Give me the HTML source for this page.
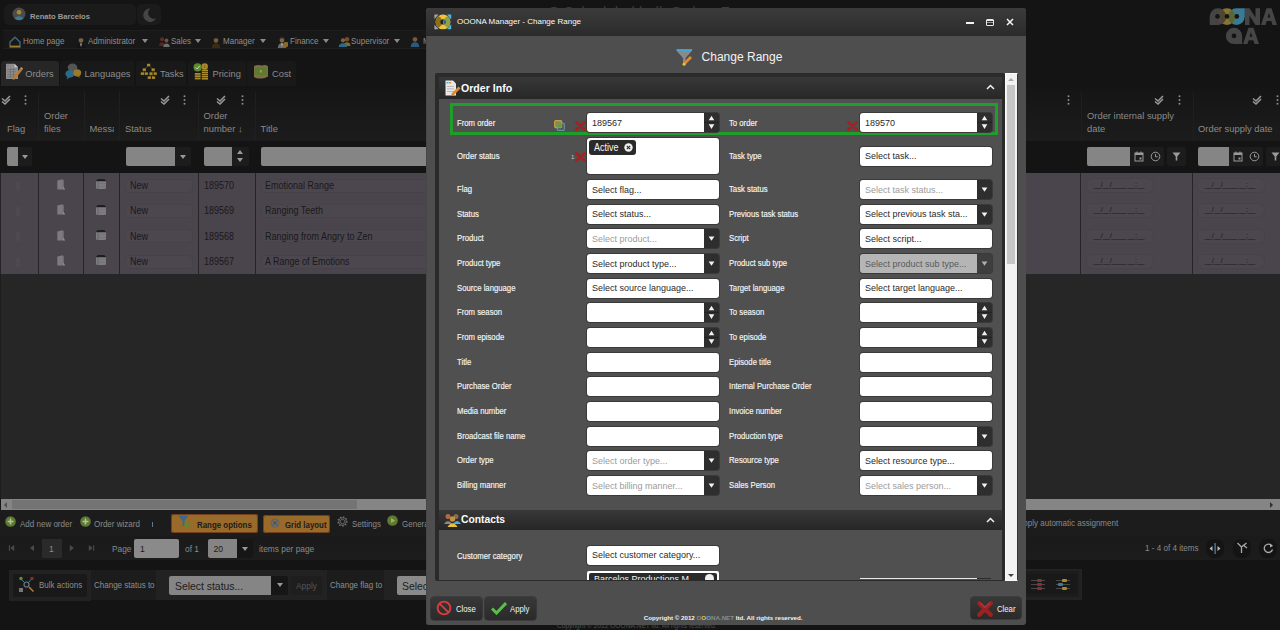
<!DOCTYPE html><html><head><meta charset="utf-8"><title>OOONA Manager - Change Range</title><style>
*{box-sizing:border-box;margin:0;padding:0}
html,body{width:1280px;height:630px;overflow:hidden}
body{position:relative;background:#141414;font-family:"Liberation Sans",sans-serif;color:#9a9a9a}
.ab{position:absolute}
.t{position:absolute;white-space:nowrap;line-height:1}
.lbl{position:absolute;white-space:nowrap;line-height:1;font-size:8.7px;color:#f6f6f6;transform:scaleX(0.89);transform-origin:0 0;-webkit-text-stroke:0.15px #f6f6f6}
.inp{position:absolute;background:#fff;border-radius:3px;box-shadow:0 0 0 1px #3a3a3a;height:19px;overflow:hidden}
.inp span{position:absolute;left:5.4px;top:4.5px;font-size:9.9px;line-height:1;color:#2a2a2a;white-space:nowrap;transform:scaleX(0.91);transform-origin:0 0}
.inp span.ph{color:#9b9b9b}
.arr{position:absolute;top:0;right:0;width:15px;height:100%;background:#2e2e2e;border-radius:0 3px 3px 0}
.spin{position:absolute;top:0;right:0;width:15px;height:19px;background:#2e2e2e;border-radius:0 3px 3px 0}
.arr svg,.spin svg{position:absolute;left:0;top:0}
.rx{position:absolute;width:11px;height:10px}
.hdrtxt{font-size:9.4px;color:#8a8a8a}
.cell{position:absolute;background:#4a454c}
.btn{position:absolute;background:linear-gradient(#383838,#2a2a2a);border-radius:3px;box-shadow:0 0 0 0.6px #2a2a2a}
</style></head><body>
<div class="ab" style="left:4px;top:4px;width:132px;height:21px;background:#1b1b1b;border-radius:5px"></div>
<svg class="ab" style="left:12px;top:7px" width="14" height="14" viewBox="0 0 14 14"><circle cx="7" cy="7" r="6.5" fill="#4b4b4b"/><circle cx="7" cy="5.2" r="2.3" fill="#a8892e"/><path d="M2.8 11.2 Q7 7.2 11.2 11.2 L11 12 Q7 14 3 12Z" fill="#3a7d9a"/></svg>
<div class="t" style="left:30px;top:12.5px;font-size:7.6px;font-weight:bold;color:#9a9a9a">Renato Barcelos</div>
<div class="ab" style="left:137px;top:4px;width:24px;height:21px;background:#1b1b1b;border-radius:5px"></div>
<svg class="ab" style="left:141.5px;top:8.3px" width="15" height="14" viewBox="0 0 15 14"><path d="M8.5 0.5 A6.7 6.7 0 1 0 14 10.2 A5.6 5.6 0 0 1 8.5 0.5Z" fill="#454545"/></svg>
<div class="ab" style="left:3px;top:30px;width:440px;height:19px;background:#181818;border-top:1px solid #1e1e1e;border-bottom:1px solid #1f1f1f"></div>
<svg class="ab" style="left:9px;top:35.5px" width="12" height="12" viewBox="0 0 12 12"><path d="M1 6 L6 1.2 L11 6 V11 H1Z" fill="none" stroke="#3a6e88" stroke-width="1.3"/><path d="M1 9.6 H11 V11 H1Z" fill="#9a7e2c"/><path d="M1 6 L6 1.2" stroke="#555" stroke-width="1.3"/></svg>
<div class="t" style="left:22.7px;top:36.9px;font-size:9px;color:#8e8e8e;transform:scaleX(0.89);transform-origin:0 0">Home page</div>
<svg class="ab" style="left:75.6px;top:35.5px" width="10" height="12" viewBox="0 0 10 12"><path d="M0.8 12 Q0.8 7.2 5 7.2 Q9.2 7.2 9.2 12Z" fill="#141414"/><path d="M3.8 7.4 L5 11 L6.2 7.4Z" fill="#9a9a9a"/><ellipse cx="5" cy="4" rx="2.3" ry="2.7" fill="#7a6448"/><path d="M2.6 3.6 Q2.6 0.8 5 0.8 Q7.4 0.8 7.4 3.6 Q6.5 2.2 5 2.2 Q3.5 2.2 2.6 3.6Z" fill="#1a1a1a"/></svg>
<div class="t" style="left:88px;top:36.9px;font-size:9px;color:#8e8e8e;transform:scaleX(0.89);transform-origin:0 0">Administrator</div>
<div class="ab" style="left:142px;top:39px;border-left:3px solid transparent;border-right:3px solid transparent;border-top:4px solid #8a8a8a"></div>
<svg class="ab" style="left:157.5px;top:36px" width="13" height="11" viewBox="0 0 13 11"><circle cx="4" cy="3.2" r="2" fill="#5e2e28"/><path d="M1 10 Q1 6.2 4 6.2 Q7 6.2 7 10Z" fill="#5a2222"/><circle cx="8.5" cy="4.5" r="1.9" fill="#6a5840"/><path d="M5.3 11 Q5.3 7.5 8.5 7.5 Q11.7 7.5 11.7 11Z" fill="#6e6e6e"/></svg>
<div class="t" style="left:170.6px;top:36.9px;font-size:9px;color:#8e8e8e;transform:scaleX(0.89);transform-origin:0 0">Sales</div>
<div class="ab" style="left:194.7px;top:39px;border-left:3px solid transparent;border-right:3px solid transparent;border-top:4px solid #8a8a8a"></div>
<svg class="ab" style="left:211.4px;top:35.5px" width="10" height="12" viewBox="0 0 10 12"><path d="M0.8 12 Q0.8 7.2 5 7.2 Q9.2 7.2 9.2 12Z" fill="#3a2a18"/><ellipse cx="5" cy="4" rx="2.3" ry="2.7" fill="#7a5a38"/><path d="M2.6 3.6 Q2.6 0.8 5 0.8 Q7.4 0.8 7.4 3.6 Q6.5 2.2 5 2.2 Q3.5 2.2 2.6 3.6Z" fill="#1a1a1a"/></svg>
<div class="t" style="left:223.4px;top:36.9px;font-size:9px;color:#8e8e8e;transform:scaleX(0.89);transform-origin:0 0">Manager</div>
<div class="ab" style="left:260.4px;top:39px;border-left:3px solid transparent;border-right:3px solid transparent;border-top:4px solid #8a8a8a"></div>
<svg class="ab" style="left:276.5px;top:35.5px" width="10" height="12" viewBox="0 0 10 12"><path d="M0.8 12 Q0.8 7.2 5 7.2 Q9.2 7.2 9.2 12Z" fill="#6a6a6a"/><path d="M3.8 7.4 L5 11 L6.2 7.4Z" fill="#aaa"/><ellipse cx="5" cy="4" rx="2.3" ry="2.7" fill="#7a6448"/><path d="M2.6 3.6 Q2.6 0.8 5 0.8 Q7.4 0.8 7.4 3.6 Q6.5 2.2 5 2.2 Q3.5 2.2 2.6 3.6Z" fill="#2a2a2a"/></svg>
<div class="ab" style="left:284px;top:42px;width:4px;height:5px;background:#8a6a20;border-radius:1px"></div>
<div class="t" style="left:289.7px;top:36.9px;font-size:9px;color:#8e8e8e;transform:scaleX(0.89);transform-origin:0 0">Finance</div>
<div class="ab" style="left:322.8px;top:39px;border-left:3px solid transparent;border-right:3px solid transparent;border-top:4px solid #8a8a8a"></div>
<svg class="ab" style="left:337.5px;top:36px" width="14" height="11" viewBox="0 0 14 11"><circle cx="9" cy="3.2" r="2.2" fill="#7a4a30"/><path d="M5.5 10 Q5.5 6.2 9 6.2 Q12.5 6.2 12.5 10Z" fill="#8a6a20"/><circle cx="5" cy="4.3" r="2.1" fill="#7a6448"/><path d="M0.8 11 Q0.8 7.3 5 7.3 Q9.2 7.3 9.2 11Z" fill="#2e6a86"/></svg>
<div class="t" style="left:351px;top:36.9px;font-size:9px;color:#8e8e8e;transform:scaleX(0.89);transform-origin:0 0">Supervisor</div>
<div class="ab" style="left:393.8px;top:39px;border-left:3px solid transparent;border-right:3px solid transparent;border-top:4px solid #8a8a8a"></div>
<svg class="ab" style="left:409.5px;top:35px" width="10" height="12" viewBox="0 0 10 12"><path d="M0.8 12 Q0.8 7.2 5 7.2 Q9.2 7.2 9.2 12Z" fill="#2a5a7a"/><ellipse cx="5" cy="4" rx="2.3" ry="2.7" fill="#7a5a38"/><path d="M2.6 3.6 Q2.6 0.8 5 0.8 Q7.4 0.8 7.4 3.6 Q6.5 2.2 5 2.2 Q3.5 2.2 2.6 3.6Z" fill="#1a1a1a"/></svg>
<div class="t" style="left:423px;top:36.9px;font-size:9px;color:#8e8e8e;transform:scaleX(0.89);transform-origin:0 0">M</div>
<div class="ab" style="left:1px;top:60.5px;width:57.6px;height:25px;background:#262626;border-radius:3px 3px 0 0"></div>
<div class="t" style="left:25.3px;top:69.5px;font-size:9.3px;color:#8c8c8c">Orders</div>
<div class="ab" style="left:60px;top:60.5px;width:73.6px;height:25px;background:#191919;border-radius:3px 3px 0 0"></div>
<div class="t" style="left:84.5px;top:69.5px;font-size:9.3px;color:#8c8c8c">Languages</div>
<div class="ab" style="left:135.5px;top:60.5px;width:50.5px;height:25px;background:#191919;border-radius:3px 3px 0 0"></div>
<div class="t" style="left:160px;top:69.5px;font-size:9.3px;color:#8c8c8c">Tasks</div>
<div class="ab" style="left:188px;top:60.5px;width:57.599999999999994px;height:25px;background:#191919;border-radius:3px 3px 0 0"></div>
<div class="t" style="left:212.5px;top:69.5px;font-size:9.3px;color:#8c8c8c">Pricing</div>
<div class="ab" style="left:247px;top:60.5px;width:48.80000000000001px;height:25px;background:#191919;border-radius:3px 3px 0 0"></div>
<div class="t" style="left:272px;top:69.5px;font-size:9.3px;color:#8c8c8c">Cost</div>
<svg class="ab" style="left:5px;top:63px" width="18" height="17" viewBox="0 0 18 17"><path d="M1 0.8 H9.5 L13 4.3 V16 H1Z" fill="#8e8e8e"/><path d="M9.5 0.8 V4.3 H13Z" fill="#c8c8c8"/><rect x="2" y="2.2" width="1.6" height="1" fill="#4a8ab0"/><rect x="4" y="2.2" width="1.6" height="1" fill="#b08a30"/><g fill="#6a6a6a"><rect x="2.2" y="6" width="9" height="0.7"/><rect x="2.2" y="8.5" width="9" height="0.7"/><rect x="2.2" y="11" width="9" height="0.7"/><rect x="2.2" y="13.5" width="9" height="0.7"/><rect x="5" y="5" width="0.7" height="10"/><rect x="8" y="5" width="0.7" height="10"/></g><path d="M8 14.5 L15.2 5.2 L17.3 6.9 L10.1 16.2 L7.6 16.8Z" fill="#b87a34"/><path d="M15.2 5.2 L16.2 4 L18 5.6 L17.3 6.9Z" fill="#c8a070"/></svg>
<svg class="ab" style="left:65px;top:63px" width="17" height="17" viewBox="0 0 17 17"><ellipse cx="7.5" cy="4.5" rx="4.8" ry="4" fill="#555"/><path d="M6 8 L5.5 11 L8.5 8Z" fill="#555"/><ellipse cx="5" cy="10.8" rx="4.6" ry="3.8" fill="#2c6a88"/><path d="M2.5 13.5 L1.5 16.5 L5.5 14Z" fill="#2c6a88"/><ellipse cx="12.2" cy="9.8" rx="4" ry="3.6" fill="#9a7a2a"/><path d="M13.5 12.5 L15.5 15 L12 13Z" fill="#9a7a2a"/></svg>
<svg class="ab" style="left:140px;top:63px" width="18" height="17" viewBox="140 63 18 17"><g stroke="#6a5a2a" stroke-width="0.6" fill="none"><path d="M148.6 65 L144.3 69.6 M148.6 65 L153.2 69.6 M144.3 69.6 L142.4 73.6 M144.3 69.6 L146.3 73.6 M153.2 69.6 L151 73.6 M153.2 69.6 L155.2 73.6 M151 73.6 L149.3 77.6 M151 73.6 L153.5 77.6"/></g><g fill="#a8892e"><rect x="147" y="63.8" width="3.2" height="2.5"/><rect x="142.7" y="68.4" width="3.2" height="2.5"/><rect x="151.6" y="68.4" width="3.2" height="2.5"/><rect x="140.8" y="72.4" width="3.2" height="2.5"/><rect x="144.7" y="72.4" width="3.2" height="2.5"/><rect x="149.4" y="72.4" width="3.2" height="2.5"/><rect x="153.6" y="72.4" width="3.2" height="2.5"/><rect x="147.7" y="76.4" width="3.2" height="2.5"/><rect x="151.9" y="76.4" width="3.2" height="2.5"/></g></svg>
<svg class="ab" style="left:193px;top:62px" width="16" height="18" viewBox="193 62 16 18"><g fill="#a8892e"><rect x="194.8" y="73" width="5.8" height="1.8"/><rect x="194.8" y="75.3" width="5.8" height="1.8"/><rect x="194.8" y="77.6" width="5.8" height="1.8"/><rect x="201.7" y="69.6" width="6.3" height="1.6"/><rect x="201.7" y="71.7" width="6.3" height="1.6"/><rect x="201.7" y="73.8" width="6.3" height="1.6"/><rect x="201.7" y="75.9" width="6.3" height="1.6"/><rect x="201.7" y="78" width="6.3" height="1.6"/><circle cx="204.7" cy="66.5" r="3.2"/></g><circle cx="197.6" cy="67.4" r="4.1" fill="#5e8a2e"/><path d="M195.6 67.4 L197.2 69 L199.8 65.8" fill="none" stroke="#ddd" stroke-width="0.9"/><rect x="204.2" y="65" width="1" height="3" fill="#7a6420"/></svg>
<svg class="ab" style="left:253px;top:64px" width="16" height="16" viewBox="253 64 16 16"><path d="M254 66 Q258 64.3 262 65.5 Q266 64.3 268 66.5 V76.5 Q264 79 261 78.5 Q257 79 254 77Z" fill="#7e6e44"/><rect x="254.8" y="67.6" width="12" height="7.3" fill="#5e7a2e"/><rect x="259.8" y="70" width="2" height="2.5" fill="#8aa060"/></svg>
<div class="ab" style="left:0;top:88px;width:1280px;height:53px;background:linear-gradient(#151515,#1c1c1c)"></div>
<div class="ab" style="left:38.3px;top:92px;width:1px;height:49px;background:#1f1f1f"></div>
<div class="ab" style="left:83.8px;top:92px;width:1px;height:49px;background:#1f1f1f"></div>
<div class="ab" style="left:119.2px;top:92px;width:1px;height:49px;background:#1f1f1f"></div>
<div class="ab" style="left:198px;top:92px;width:1px;height:49px;background:#1f1f1f"></div>
<div class="ab" style="left:254.9px;top:92px;width:1px;height:49px;background:#1f1f1f"></div>
<div class="ab" style="left:1080.5px;top:92px;width:1px;height:49px;background:#1f1f1f"></div>
<div class="ab" style="left:1192.7px;top:92px;width:1px;height:49px;background:#1f1f1f"></div>
<div class="t hdrtxt" style="left:7px;top:123.5px">Flag</div>
<div class="t hdrtxt" style="left:44px;top:110.5px">Order</div>
<div class="t hdrtxt" style="left:44px;top:123.5px">files</div>
<div class="t hdrtxt" style="left:89.5px;top:123.5px;width:24px;overflow:hidden">Messa</div>
<div class="t hdrtxt" style="left:125px;top:123.5px">Status</div>
<div class="t hdrtxt" style="left:203.5px;top:110.5px">Order</div>
<div class="t hdrtxt" style="left:203.5px;top:123.5px">number ↓</div>
<div class="t hdrtxt" style="left:260.5px;top:123.5px">Title</div>
<div class="t hdrtxt" style="left:1087px;top:110.5px">Order internal supply</div>
<div class="t hdrtxt" style="left:1087px;top:123.5px">date</div>
<div class="t hdrtxt" style="left:1198px;top:123.5px">Order supply date</div>
<svg class="ab" style="left:1px;top:95px" width="10" height="10" viewBox="0 0 10 10"><path d="M1 3.5 L4 6 L9 1 M1 6.5 L4 9 L9 4" fill="none" stroke="#9a9a9a" stroke-width="1.5"/></svg>
<svg class="ab" style="left:160px;top:95px" width="10" height="10" viewBox="0 0 10 10"><path d="M1 3.5 L4 6 L9 1 M1 6.5 L4 9 L9 4" fill="none" stroke="#9a9a9a" stroke-width="1.5"/></svg>
<svg class="ab" style="left:216px;top:95px" width="10" height="10" viewBox="0 0 10 10"><path d="M1 3.5 L4 6 L9 1 M1 6.5 L4 9 L9 4" fill="none" stroke="#9a9a9a" stroke-width="1.5"/></svg>
<svg class="ab" style="left:1154px;top:95px" width="10" height="10" viewBox="0 0 10 10"><path d="M1 3.5 L4 6 L9 1 M1 6.5 L4 9 L9 4" fill="none" stroke="#9a9a9a" stroke-width="1.5"/></svg>
<svg class="ab" style="left:1252px;top:95px" width="10" height="10" viewBox="0 0 10 10"><path d="M1 3.5 L4 6 L9 1 M1 6.5 L4 9 L9 4" fill="none" stroke="#9a9a9a" stroke-width="1.5"/></svg>
<svg class="ab" style="left:23.5px;top:95px" width="3" height="10" viewBox="0 0 3 10"><circle cx="1.5" cy="1.2" r="1" fill="#8a8a8a"/><circle cx="1.5" cy="5" r="1" fill="#8a8a8a"/><circle cx="1.5" cy="8.8" r="1" fill="#8a8a8a"/></svg>
<svg class="ab" style="left:182.5px;top:95px" width="3" height="10" viewBox="0 0 3 10"><circle cx="1.5" cy="1.2" r="1" fill="#8a8a8a"/><circle cx="1.5" cy="5" r="1" fill="#8a8a8a"/><circle cx="1.5" cy="8.8" r="1" fill="#8a8a8a"/></svg>
<svg class="ab" style="left:240.5px;top:95px" width="3" height="10" viewBox="0 0 3 10"><circle cx="1.5" cy="1.2" r="1" fill="#8a8a8a"/><circle cx="1.5" cy="5" r="1" fill="#8a8a8a"/><circle cx="1.5" cy="8.8" r="1" fill="#8a8a8a"/></svg>
<svg class="ab" style="left:1066.5px;top:95px" width="3" height="10" viewBox="0 0 3 10"><circle cx="1.5" cy="1.2" r="1" fill="#8a8a8a"/><circle cx="1.5" cy="5" r="1" fill="#8a8a8a"/><circle cx="1.5" cy="8.8" r="1" fill="#8a8a8a"/></svg>
<svg class="ab" style="left:1177.5px;top:95px" width="3" height="10" viewBox="0 0 3 10"><circle cx="1.5" cy="1.2" r="1" fill="#8a8a8a"/><circle cx="1.5" cy="5" r="1" fill="#8a8a8a"/><circle cx="1.5" cy="8.8" r="1" fill="#8a8a8a"/></svg>
<svg class="ab" style="left:1276px;top:95px" width="3" height="10" viewBox="0 0 3 10"><circle cx="1.5" cy="1.2" r="1" fill="#8a8a8a"/><circle cx="1.5" cy="5" r="1" fill="#8a8a8a"/><circle cx="1.5" cy="8.8" r="1" fill="#8a8a8a"/></svg>
<div class="ab" style="left:0;top:141px;width:1280px;height:32px;background:#141414"></div>
<div class="ab" style="left:7px;top:147.3px;width:24.7px;height:18.69999999999999px;background:#1c1c1c;border-radius:2px"></div><div class="ab" style="left:7px;top:147.3px;width:11px;height:18.69999999999999px;background:#858585;border-radius:2px 0 0 2px"></div><div class="ab" style="left:21.85px;top:155px;border-left:3px solid transparent;border-right:3px solid transparent;border-top:4px solid #9a9a9a"></div>
<div class="ab" style="left:125.8px;top:147.3px;width:65.60000000000001px;height:18.69999999999999px;background:#1c1c1c;border-radius:2px"></div><div class="ab" style="left:125.8px;top:147.3px;width:49.2px;height:18.69999999999999px;background:#858585;border-radius:2px 0 0 2px"></div><div class="ab" style="left:180.2px;top:155px;border-left:3px solid transparent;border-right:3px solid transparent;border-top:4px solid #9a9a9a"></div>
<div class="ab" style="left:204px;top:147.3px;width:44.69999999999999px;height:18.69999999999999px;background:#1c1c1c;border-radius:2px"></div><div class="ab" style="left:204px;top:147.3px;width:28px;height:18.69999999999999px;background:#858585;border-radius:2px 0 0 2px"></div><div class="ab" style="left:237.35px;top:150px;border-left:3px solid transparent;border-right:3px solid transparent;border-bottom:4px solid #9a9a9a"></div><div class="ab" style="left:237.35px;top:158px;border-left:3px solid transparent;border-right:3px solid transparent;border-top:4px solid #9a9a9a"></div>
<div class="ab" style="left:261px;top:147.3px;width:170px;height:18.7px;background:#858585;border-radius:2px"></div>
<div class="ab" style="left:1087px;top:147.3px;width:76.5px;height:18.7px;background:#1c1c1c;border-radius:2px"></div><div class="ab" style="left:1087px;top:147.3px;width:43px;height:18.7px;background:#858585;border-radius:2px 0 0 2px"></div><svg class="ab" style="left:1134px;top:151px" width="10" height="11" viewBox="0 0 10 11"><rect x="1" y="2" width="8" height="8" fill="none" stroke="#9a9a9a" stroke-width="1"/><rect x="1" y="2" width="8" height="2" fill="#9a9a9a"/><rect x="2.5" y="0.5" width="1" height="2" fill="#9a9a9a"/><rect x="6.5" y="0.5" width="1" height="2" fill="#9a9a9a"/><rect x="5.5" y="6.5" width="2" height="2" fill="#9a9a9a"/></svg><svg class="ab" style="left:1149.5px;top:151px" width="11" height="11" viewBox="0 0 11 11"><circle cx="5.5" cy="5.5" r="4.3" fill="none" stroke="#9a9a9a" stroke-width="1"/><path d="M5.5 3 V5.8 H7.8" fill="none" stroke="#9a9a9a" stroke-width="1"/></svg><div class="ab" style="left:1167.3px;top:147.3px;width:19px;height:18.7px;background:#1c1c1c;border-radius:2px"></div><svg class="ab" style="left:1172.3px;top:152px" width="9" height="9" viewBox="0 0 9 9"><path d="M0.5 0.5 H8.5 L5.3 4.5 V8.5 H3.7 V4.5Z" fill="#9a9a9a"/></svg>
<div class="ab" style="left:1198px;top:147.3px;width:64.5px;height:18.7px;background:#1c1c1c;border-radius:2px"></div><div class="ab" style="left:1198px;top:147.3px;width:31px;height:18.7px;background:#858585;border-radius:2px 0 0 2px"></div><svg class="ab" style="left:1233px;top:151px" width="10" height="11" viewBox="0 0 10 11"><rect x="1" y="2" width="8" height="8" fill="none" stroke="#9a9a9a" stroke-width="1"/><rect x="1" y="2" width="8" height="2" fill="#9a9a9a"/><rect x="2.5" y="0.5" width="1" height="2" fill="#9a9a9a"/><rect x="6.5" y="0.5" width="1" height="2" fill="#9a9a9a"/><rect x="5.5" y="6.5" width="2" height="2" fill="#9a9a9a"/></svg><svg class="ab" style="left:1248.5px;top:151px" width="11" height="11" viewBox="0 0 11 11"><circle cx="5.5" cy="5.5" r="4.3" fill="none" stroke="#9a9a9a" stroke-width="1"/><path d="M5.5 3 V5.8 H7.8" fill="none" stroke="#9a9a9a" stroke-width="1"/></svg><div class="ab" style="left:1266.3px;top:147.3px;width:19px;height:18.7px;background:#1c1c1c;border-radius:2px"></div><svg class="ab" style="left:1271.3px;top:152px" width="9" height="9" viewBox="0 0 9 9"><path d="M0.5 0.5 H8.5 L5.3 4.5 V8.5 H3.7 V4.5Z" fill="#9a9a9a"/></svg>
<div class="ab" style="left:0;top:172.7px;width:1280px;height:101px;background:#4a454c"></div>
<div class="ab" style="left:0px;top:172.7px;width:1.2px;height:101px;background:#262427"></div>
<div class="ab" style="left:38.1px;top:172.7px;width:0.9px;height:101px;background:#262427"></div>
<div class="ab" style="left:83.2px;top:172.7px;width:0.9px;height:101px;background:#262427"></div>
<div class="ab" style="left:118.9px;top:172.7px;width:0.9px;height:101px;background:#262427"></div>
<div class="ab" style="left:198px;top:172.7px;width:0.9px;height:101px;background:#262427"></div>
<div class="ab" style="left:254.9px;top:172.7px;width:0.9px;height:101px;background:#262427"></div>
<div class="ab" style="left:1080.2px;top:172.7px;width:0.9px;height:101px;background:#262427"></div>
<div class="ab" style="left:1192.4px;top:172.7px;width:0.9px;height:101px;background:#262427"></div>
<div class="ab" style="left:16px;top:181.5px;width:4px;height:9px;background:#4e4950"></div>
<svg class="ab" style="left:56.8px;top:178.9px" width="9" height="11" viewBox="0 0 9 11"><path d="M0.3 1.5 L5.5 0.3 V10.5 H0.3Z" fill="#7c7a7e"/><path d="M5.5 0.3 L6.5 1.2 V7.5 L8.2 10.5 H5.5Z" fill="#8e8c90"/></svg>
<svg class="ab" style="left:96.2px;top:179.2px" width="10" height="10" viewBox="0 0 10 10"><rect x="0" y="0" width="10" height="10" rx="1.5" fill="#7e7c80"/><path d="M0 2 Q0 0 2 0 H8 Q10 0 10 2 V2.2 H0Z" fill="#1e1e1e"/><rect x="1.6" y="2.2" width="0.8" height="7.8" fill="#5e5c60"/><g fill="#6e6c70"><rect x="3" y="4.5" width="7" height="0.5"/><rect x="3" y="7" width="7" height="0.5"/></g></svg>
<div class="ab" style="left:125px;top:178.5px;width:68px;height:14px;border:1px solid #47424a;border-radius:4px;background:#4c474e"></div>
<div class="t" style="left:129.5px;top:180.9px;font-size:10px;color:#1a181b;transform:scaleX(0.9);transform-origin:0 0">New</div>
<div class="t" style="left:204px;top:180.9px;font-size:10px;color:#1a181b;transform:scaleX(0.9);transform-origin:0 0">189570</div>
<div class="ab" style="left:261px;top:178.5px;width:170px;height:14px;border:1px solid #47424a;border-radius:4px;background:#4c474e"></div>
<div class="t" style="left:264.5px;top:180.9px;font-size:10px;color:#1a181b;transform:scaleX(0.9);transform-origin:0 0">Emotional Range</div>
<div class="ab" style="left:1086px;top:178.0px;width:68px;height:15px;border:1px solid #47424a;border-radius:6px;background:#4c474e"></div>
<div class="t" style="left:1093.5px;top:180.9px;font-size:7.4px;color:#1a181b;letter-spacing:-0.45px">__/__/____ __:__</div>
<div class="ab" style="left:1197px;top:178.0px;width:68px;height:15px;border:1px solid #47424a;border-radius:6px;background:#4c474e"></div>
<div class="t" style="left:1204.5px;top:180.9px;font-size:7.4px;color:#1a181b;letter-spacing:-0.45px">__/__/____ __:__</div>
<div class="ab" style="left:16px;top:206.9px;width:4px;height:9px;background:#4e4950"></div>
<svg class="ab" style="left:56.8px;top:204.3px" width="9" height="11" viewBox="0 0 9 11"><path d="M0.3 1.5 L5.5 0.3 V10.5 H0.3Z" fill="#7c7a7e"/><path d="M5.5 0.3 L6.5 1.2 V7.5 L8.2 10.5 H5.5Z" fill="#8e8c90"/></svg>
<svg class="ab" style="left:96.2px;top:204.6px" width="10" height="10" viewBox="0 0 10 10"><rect x="0" y="0" width="10" height="10" rx="1.5" fill="#7e7c80"/><path d="M0 2 Q0 0 2 0 H8 Q10 0 10 2 V2.2 H0Z" fill="#1e1e1e"/><rect x="1.6" y="2.2" width="0.8" height="7.8" fill="#5e5c60"/><g fill="#6e6c70"><rect x="3" y="4.5" width="7" height="0.5"/><rect x="3" y="7" width="7" height="0.5"/></g></svg>
<div class="ab" style="left:125px;top:203.9px;width:68px;height:14px;border:1px solid #47424a;border-radius:4px;background:#4c474e"></div>
<div class="t" style="left:129.5px;top:206.3px;font-size:10px;color:#1a181b;transform:scaleX(0.9);transform-origin:0 0">New</div>
<div class="t" style="left:204px;top:206.3px;font-size:10px;color:#1a181b;transform:scaleX(0.9);transform-origin:0 0">189569</div>
<div class="ab" style="left:261px;top:203.9px;width:170px;height:14px;border:1px solid #47424a;border-radius:4px;background:#4c474e"></div>
<div class="t" style="left:264.5px;top:206.3px;font-size:10px;color:#1a181b;transform:scaleX(0.9);transform-origin:0 0">Ranging Teeth</div>
<div class="ab" style="left:1086px;top:203.4px;width:68px;height:15px;border:1px solid #47424a;border-radius:6px;background:#4c474e"></div>
<div class="t" style="left:1093.5px;top:206.3px;font-size:7.4px;color:#1a181b;letter-spacing:-0.45px">__/__/____ __:__</div>
<div class="ab" style="left:1197px;top:203.4px;width:68px;height:15px;border:1px solid #47424a;border-radius:6px;background:#4c474e"></div>
<div class="t" style="left:1204.5px;top:206.3px;font-size:7.4px;color:#1a181b;letter-spacing:-0.45px">__/__/____ __:__</div>
<div class="ab" style="left:16px;top:232.3px;width:4px;height:9px;background:#4e4950"></div>
<svg class="ab" style="left:56.8px;top:229.70000000000002px" width="9" height="11" viewBox="0 0 9 11"><path d="M0.3 1.5 L5.5 0.3 V10.5 H0.3Z" fill="#7c7a7e"/><path d="M5.5 0.3 L6.5 1.2 V7.5 L8.2 10.5 H5.5Z" fill="#8e8c90"/></svg>
<svg class="ab" style="left:96.2px;top:230.0px" width="10" height="10" viewBox="0 0 10 10"><rect x="0" y="0" width="10" height="10" rx="1.5" fill="#7e7c80"/><path d="M0 2 Q0 0 2 0 H8 Q10 0 10 2 V2.2 H0Z" fill="#1e1e1e"/><rect x="1.6" y="2.2" width="0.8" height="7.8" fill="#5e5c60"/><g fill="#6e6c70"><rect x="3" y="4.5" width="7" height="0.5"/><rect x="3" y="7" width="7" height="0.5"/></g></svg>
<div class="ab" style="left:125px;top:229.3px;width:68px;height:14px;border:1px solid #47424a;border-radius:4px;background:#4c474e"></div>
<div class="t" style="left:129.5px;top:231.70000000000002px;font-size:10px;color:#1a181b;transform:scaleX(0.9);transform-origin:0 0">New</div>
<div class="t" style="left:204px;top:231.70000000000002px;font-size:10px;color:#1a181b;transform:scaleX(0.9);transform-origin:0 0">189568</div>
<div class="ab" style="left:261px;top:229.3px;width:170px;height:14px;border:1px solid #47424a;border-radius:4px;background:#4c474e"></div>
<div class="t" style="left:264.5px;top:231.70000000000002px;font-size:10px;color:#1a181b;transform:scaleX(0.9);transform-origin:0 0">Ranging from Angry to Zen</div>
<div class="ab" style="left:1086px;top:228.8px;width:68px;height:15px;border:1px solid #47424a;border-radius:6px;background:#4c474e"></div>
<div class="t" style="left:1093.5px;top:231.70000000000002px;font-size:7.4px;color:#1a181b;letter-spacing:-0.45px">__/__/____ __:__</div>
<div class="ab" style="left:1197px;top:228.8px;width:68px;height:15px;border:1px solid #47424a;border-radius:6px;background:#4c474e"></div>
<div class="t" style="left:1204.5px;top:231.70000000000002px;font-size:7.4px;color:#1a181b;letter-spacing:-0.45px">__/__/____ __:__</div>
<div class="ab" style="left:16px;top:257.7px;width:4px;height:9px;background:#4e4950"></div>
<svg class="ab" style="left:56.8px;top:255.1px" width="9" height="11" viewBox="0 0 9 11"><path d="M0.3 1.5 L5.5 0.3 V10.5 H0.3Z" fill="#7c7a7e"/><path d="M5.5 0.3 L6.5 1.2 V7.5 L8.2 10.5 H5.5Z" fill="#8e8c90"/></svg>
<svg class="ab" style="left:96.2px;top:255.39999999999998px" width="10" height="10" viewBox="0 0 10 10"><rect x="0" y="0" width="10" height="10" rx="1.5" fill="#7e7c80"/><path d="M0 2 Q0 0 2 0 H8 Q10 0 10 2 V2.2 H0Z" fill="#1e1e1e"/><rect x="1.6" y="2.2" width="0.8" height="7.8" fill="#5e5c60"/><g fill="#6e6c70"><rect x="3" y="4.5" width="7" height="0.5"/><rect x="3" y="7" width="7" height="0.5"/></g></svg>
<div class="ab" style="left:125px;top:254.7px;width:68px;height:14px;border:1px solid #47424a;border-radius:4px;background:#4c474e"></div>
<div class="t" style="left:129.5px;top:257.09999999999997px;font-size:10px;color:#1a181b;transform:scaleX(0.9);transform-origin:0 0">New</div>
<div class="t" style="left:204px;top:257.09999999999997px;font-size:10px;color:#1a181b;transform:scaleX(0.9);transform-origin:0 0">189567</div>
<div class="ab" style="left:261px;top:254.7px;width:170px;height:14px;border:1px solid #47424a;border-radius:4px;background:#4c474e"></div>
<div class="t" style="left:264.5px;top:257.09999999999997px;font-size:10px;color:#1a181b;transform:scaleX(0.9);transform-origin:0 0">A Range of Emotions</div>
<div class="ab" style="left:1086px;top:254.2px;width:68px;height:15px;border:1px solid #47424a;border-radius:6px;background:#4c474e"></div>
<div class="t" style="left:1093.5px;top:257.09999999999997px;font-size:7.4px;color:#1a181b;letter-spacing:-0.45px">__/__/____ __:__</div>
<div class="ab" style="left:1197px;top:254.2px;width:68px;height:15px;border:1px solid #47424a;border-radius:6px;background:#4c474e"></div>
<div class="t" style="left:1204.5px;top:257.09999999999997px;font-size:7.4px;color:#1a181b;letter-spacing:-0.45px">__/__/____ __:__</div>
<div class="ab" style="left:0;top:273.7px;width:1280px;height:225px;background:#262626"></div>
<div class="ab" style="left:0;top:273.7px;width:1px;height:225px;background:#1e1e1e"></div>
<div class="ab" style="left:1px;top:499px;width:1279px;height:11px;background:#858585"></div>
<div class="ab" style="left:12px;top:500px;width:345px;height:9px;background:#747474"></div>
<div class="ab" style="left:4px;top:502px;border-top:3px solid transparent;border-bottom:3px solid transparent;border-right:3px solid #505050"></div>
<div class="ab" style="left:1270px;top:502px;border-top:3px solid transparent;border-bottom:3px solid transparent;border-left:3px solid #303030"></div>
<div class="ab" style="left:0;top:510px;width:1280px;height:25.5px;background:#1c1c1c"></div>
<svg class="ab" style="left:5px;top:516px" width="11" height="11" viewBox="0 0 11 11"><circle cx="5.5" cy="5.5" r="5.3" fill="#5e7a2e"/><path d="M5.5 2.6 V8.4 M2.6 5.5 H8.4" stroke="#b8c0a8" stroke-width="1.5"/></svg>
<div class="t" style="left:20px;top:519.69px;font-size:9px;color:#8a8a8a;transform:scaleX(0.89);transform-origin:0 0">Add new order</div>
<svg class="ab" style="left:80px;top:516px" width="11" height="11" viewBox="0 0 11 11"><circle cx="5.5" cy="5.5" r="5.3" fill="#5e7a2e"/><path d="M5.5 2.6 V8.4 M2.6 5.5 H8.4" stroke="#b8c0a8" stroke-width="1.5"/></svg>
<div class="t" style="left:94px;top:519.69px;font-size:9px;color:#8a8a8a;transform:scaleX(0.89);transform-origin:0 0">Order wizard</div>
<div class="ab" style="left:152px;top:521.5px;width:1px;height:5.5px;background:#5a7a9a"></div>
<div class="ab" style="left:170.8px;top:514.2px;width:87px;height:18.6px;background:#9a6a2b;border-radius:3px;box-shadow:inset 0 0 0 1px #74401f"></div>
<svg class="ab" style="left:178px;top:514.5px" width="13" height="13" viewBox="0 0 13 13"><path d="M0.5 0.5 H10.5 L6.5 6 V11 H4.5 V6Z" fill="#3a6a8a"/><circle cx="9" cy="10" r="2.5" fill="#5e8a2e"/></svg>
<div class="t" style="left:196.5px;top:521.2px;font-size:9px;font-weight:bold;color:#1c1c1c;transform:scaleX(0.877);transform-origin:0 0">Range options</div>
<div class="ab" style="left:263.3px;top:514.8px;width:66.5px;height:18px;background:#9a6a2b;border-radius:3px;box-shadow:inset 0 0 0 1px #74401f"></div>
<svg class="ab" style="left:269.5px;top:517.5px" width="10" height="10" viewBox="0 0 10 10"><circle cx="5" cy="5" r="4.5" fill="#5a6470"/><g fill="#9a6a2b"><circle cx="5" cy="2.3" r="1.1"/><circle cx="5" cy="7.7" r="1.1"/><circle cx="2.3" cy="5" r="1.1"/><circle cx="7.7" cy="5" r="1.1"/></g><circle cx="5" cy="5" r="0.9" fill="#3a4450"/></svg>
<div class="t" style="left:284.5px;top:520.6px;font-size:9px;font-weight:bold;color:#1c1c1c;transform:scaleX(0.874);transform-origin:0 0">Grid layout</div>
<svg class="ab" style="left:337px;top:515.5px" width="11" height="11" viewBox="0 0 11 11"><path d="M10.80 5.50 L10.72 6.42 L9.26 6.87 L8.96 7.50 L9.56 8.91 L8.91 9.56 L7.50 8.96 L6.87 9.26 L6.42 10.72 L5.50 10.80 L4.81 9.44 L4.13 9.26 L2.85 10.09 L2.09 9.56 L2.44 8.07 L2.04 7.50 L0.52 7.31 L0.28 6.42 L1.50 5.50 L1.56 4.81 L0.52 3.69 L0.91 2.85 L2.44 2.93 L2.93 2.44 L2.85 0.91 L3.69 0.52 L4.81 1.56 L5.50 1.50 L6.42 0.28 L7.31 0.52 L7.50 2.04 L8.07 2.44 L9.56 2.09 L10.09 2.85 L9.26 4.13 L9.44 4.81Z" fill="#6a6a6a"/><circle cx="5.5" cy="5.5" r="3.2" fill="#1c1c1c"/><circle cx="5.5" cy="5.5" r="2.2" fill="none" stroke="#6a6a6a" stroke-width="0.9"/></svg>
<div class="t" style="left:351.7px;top:519.69px;font-size:9px;color:#8a8a8a;transform:scaleX(0.89);transform-origin:0 0">Settings</div>
<svg class="ab" style="left:387px;top:515px" width="11" height="11" viewBox="0 0 11 11"><circle cx="5.5" cy="5.5" r="5.3" fill="#5e7a2e"/><path d="M4 3 L8.3 5.5 L4 8Z" fill="#9ab06a"/></svg>
<div class="t" style="left:402px;top:519.69px;font-size:9px;color:#8a8a8a;transform:scaleX(0.89);transform-origin:0 0">General</div>
<div class="t" style="left:1018.3px;top:519.49px;font-size:9px;color:#8a8a8a;transform:scaleX(0.89);transform-origin:0 0">Apply automatic assignment</div>
<div class="ab" style="left:0;top:535.5px;width:1280px;height:24.5px;background:linear-gradient(#1a1a1a,#1c1c1c)"></div>
<svg class="ab" style="left:0px;top:544px" width="100" height="9" viewBox="0 0 100 9"><g fill="#4a4a4a"><rect x="8.9" y="1.2" width="1.1" height="5.8"/><path d="M14.2 1 V7.2 L10.2 4.1Z"/><path d="M34 1 V7.2 L30 4.1Z"/><path d="M69.8 1 V7.2 L73.9 4.1Z"/><path d="M88.8 1 V7.2 L92.6 4.1Z"/><rect x="93.1" y="1.2" width="1.1" height="5.8"/></g></svg>
<div class="ab" style="left:42px;top:539px;width:20px;height:19.4px;background:#2a2a2a"></div>
<div class="t" style="left:49px;top:544.5px;font-size:8.6px;color:#8a8a8a">1</div>
<div class="t" style="left:111.8px;top:543.69px;font-size:9.4px;color:#8a8a8a;transform:scaleX(0.89);transform-origin:0 0">Page</div>
<div class="ab" style="left:134px;top:539px;width:45px;height:19px;background:#8a8a8a;border-radius:2px"></div>
<div class="t" style="left:140px;top:544.5px;font-size:8.6px;color:#1c1c1c">1</div>
<div class="t" style="left:184.6px;top:543.69px;font-size:9.4px;color:#8a8a8a;transform:scaleX(0.89);transform-origin:0 0">of 1</div>
<div class="ab" style="left:208px;top:539.4px;width:45px;height:18.6px;background:#161616;border-radius:2px"></div>
<div class="ab" style="left:208px;top:539.4px;width:29px;height:18.6px;background:#858585;border-radius:2px 0 0 2px"></div>
<div class="t" style="left:213.5px;top:544.5px;font-size:8.6px;color:#1c1c1c">20</div>
<div class="ab" style="left:242px;top:547px;border-left:3px solid transparent;border-right:3px solid transparent;border-top:4px solid #9a9a9a"></div>
<div class="t" style="left:259px;top:543.69px;font-size:9.4px;color:#8a8a8a;transform:scaleX(0.89);transform-origin:0 0">items per page</div>
<div class="t" style="left:1145px;top:543.69px;font-size:9.1px;color:#8a8a8a;transform:scaleX(0.89);transform-origin:0 0">1 - 4 of 4 items</div>
<div class="ab" style="left:1206px;top:539px;width:18px;height:19px;background:#141414;border-radius:8px"></div>
<div class="ab" style="left:1233px;top:539px;width:18px;height:19px;background:#141414;border-radius:8px"></div>
<div class="ab" style="left:1259px;top:539px;width:18px;height:19px;background:#141414;border-radius:8px"></div>
<svg class="ab" style="left:1209px;top:543px" width="12" height="11" viewBox="0 0 12 11"><rect x="5.5" y="0" width="1.2" height="11" fill="#5a8ab0"/><path d="M0.5 5.5 L3.5 3 V8Z M11.5 5.5 L8.5 3 V8Z" fill="#bbb"/></svg>
<svg class="ab" style="left:1237px;top:542px" width="11" height="12" viewBox="0 0 11 12"><path d="M0.5 1 L4.5 5 V11 M4.5 5 L9.5 1 M6 3 L10 6" fill="none" stroke="#aaa" stroke-width="1.3"/></svg>
<svg class="ab" style="left:1263px;top:543px" width="11" height="11" viewBox="0 0 11 11"><path d="M9 3 A4.2 4.2 0 1 0 9.5 6.5" fill="none" stroke="#aaa" stroke-width="1.3"/><path d="M7 0.5 L10 3 L7 4.5Z" fill="#aaa"/></svg>
<div class="ab" style="left:8.9px;top:570px;width:1073px;height:30.4px;background:#1c1c1c"></div>
<div class="ab" style="left:9.4px;top:570px;width:81.7px;height:30.5px;background:#222"></div>
<div class="btn" style="left:12.9px;top:573.8px;width:74.4px;height:23.2px;background:#191919;box-shadow:none"></div>
<svg class="ab" style="left:18px;top:576px" width="17" height="17" viewBox="0 0 17 17"><circle cx="8.5" cy="8.5" r="2.5" fill="none" stroke="#777" stroke-width="1.2"/><circle cx="3" cy="2.5" r="1.7" fill="#6a8a3a"/><rect x="12.5" y="1" width="3" height="3" fill="#8a2a2a"/><path d="M4 4 L6.5 6.5 M10.5 6.5 L13 3.5 M10.5 10.5 L14 14" stroke="#3a7d9a" stroke-width="1"/><path d="M11 11 L15.5 15.5" stroke="#c07a30" stroke-width="1.5"/><rect x="1" y="12" width="4" height="4" fill="#777"/></svg>
<div class="t" style="left:39px;top:581.49px;font-size:9px;color:#8e8e8e;transform:scaleX(0.89);transform-origin:0 0">Bulk actions</div>
<div class="t" style="left:94px;top:581.49px;font-size:9px;color:#8e8e8e;transform:scaleX(0.89);transform-origin:0 0">Change status to</div>
<div class="ab" style="left:156px;top:570px;width:171px;height:30.4px;background:#222"></div>
<div class="ab" style="left:169.3px;top:575.5px;width:119px;height:19.5px;background:#161616;border-radius:2px"></div>
<div class="ab" style="left:169.3px;top:575.5px;width:101.7px;height:19.5px;background:#858585;border-radius:2px 0 0 2px"></div>
<div class="t" style="left:175px;top:582.3px;font-size:10.4px;color:#1c1c1c">Select status...</div>
<div class="ab" style="left:277px;top:583px;border-left:3px solid transparent;border-right:3px solid transparent;border-top:4px solid #9a9a9a"></div>
<div class="ab" style="left:290.5px;top:575.5px;width:31.2px;height:19.5px;background:#1e1e1e;border-radius:2px"></div>
<div class="t" style="left:296px;top:582.3px;font-size:8.4px;color:#555">Apply</div>
<div class="t" style="left:330px;top:581.49px;font-size:9px;color:#8e8e8e;transform:scaleX(0.89);transform-origin:0 0">Change flag to</div>
<div class="ab" style="left:384px;top:570px;width:60px;height:30.4px;background:#222"></div>
<div class="ab" style="left:397px;top:575.5px;width:40px;height:19.5px;background:#8a8a8a;border-radius:2px"></div>
<div class="t" style="left:402px;top:582.3px;font-size:10.4px;color:#1c1c1c">Select</div>
<div class="ab" style="left:1026px;top:568.5px;width:56px;height:31px;background:#222"></div>
<div class="ab" style="left:1026px;top:571px;width:53px;height:26px;background:#1c1c1c"></div>
<div class="ab" style="left:1026px;top:574px;width:26px;height:20px;background:#191919;border-radius:2px"></div>
<div class="ab" style="left:1051px;top:574px;width:26px;height:20px;background:#191919;border-radius:2px"></div>
<svg class="ab" style="left:1031px;top:579px" width="14" height="11" viewBox="0 0 14 11"><g stroke="#555" stroke-width="0.8"><path d="M0 1.5 H14 M0 5.5 H14 M0 9.5 H14"/></g><g fill="#8a3030"><rect x="6" y="0" width="5" height="3" rx="1"/><rect x="6" y="4" width="5" height="3" rx="1"/><rect x="6" y="8" width="5" height="3" rx="1"/></g></svg>
<svg class="ab" style="left:1056px;top:579px" width="14" height="11" viewBox="0 0 14 11"><g stroke="#555" stroke-width="0.8"><path d="M0 1.5 H14 M0 5.5 H14 M0 9.5 H14"/></g><rect x="6" y="0" width="5" height="3" rx="1" fill="#a8892e"/><rect x="2" y="4" width="5" height="3" rx="1" fill="#3a7d9a"/><rect x="6" y="8" width="5" height="3" rx="1" fill="#a8892e"/></svg>
<div class="t" style="left:557px;top:622.5px;font-size:6.6px;color:#4e4e4e">Copyright © 2012 OOONA.NET ltd. All rights reserved.</div>
<svg class="ab" style="left:1200px;top:0px" width="80" height="50" viewBox="1200 0 80 50">
<defs><clipPath id="cy"><circle cx="1227" cy="16.6" r="8.3"/></clipPath></defs>
<path d="M1218 8.3 A8.3 8.3 0 1 1 1218 24.9 H1209.7 V16.6 A8.3 8.3 0 0 1 1218 8.3Z" fill="#454545"/>
<circle cx="1227" cy="16.6" r="8.3" fill="#8a7530"/>
<path d="M1236.5 8.3 H1244.8 V16.6 A8.3 8.3 0 1 1 1236.5 8.3Z" fill="#3a7a92"/>
<g clip-path="url(#cy)"><path d="M1218 8.3 A8.3 8.3 0 1 1 1218 24.9 H1209.7 V16.6 A8.3 8.3 0 0 1 1218 8.3Z" fill="#4e4630"/><path d="M1236.5 8.3 H1244.8 V16.6 A8.3 8.3 0 1 1 1236.5 8.3Z" fill="#5c6632"/></g>
<circle cx="1217.5" cy="16.4" r="2.3" fill="#141414"/><circle cx="1227" cy="16.4" r="2.3" fill="#141414"/><circle cx="1236.8" cy="16.4" r="2.3" fill="#141414"/>
<path d="M1245 24.9 V8.3 H1249.5 L1255.5 17.5 V8.3 H1260 V24.9 H1255.5 L1249.5 15.7 V24.9Z" fill="#454545"/>
<path d="M1261 24.9 L1266.5 8.3 H1271.5 L1277 24.9 H1272.5 L1271.3 21 H1266.7 L1265.5 24.9Z M1267.6 17.6 H1270.4 L1269 13Z" fill="#454545" fill-rule="evenodd"/>
<path d="M1234 27.8 A8.1 8.1 0 0 1 1242.1 35.9 V44 H1234 A8.1 8.1 0 1 1 1234 27.8Z" fill="#454545"/>
<circle cx="1234" cy="35.9" r="2.4" fill="#141414"/>
<path d="M1243 44 L1248.5 27.8 H1253.5 L1259 44 H1254.5 L1253.3 40.2 H1248.7 L1247.5 44Z M1249.6 36.8 H1252.4 L1251 32.3Z" fill="#454545" fill-rule="evenodd"/>
</svg>
<div class="t" style="left:548px;top:4.3px;font-size:15px;color:#3a3a3a">O Scheduled bulk Orders F</div>
<div class="ab" style="left:426px;top:8px;width:600px;height:616.8px;background:#4e4e4e;border-radius:3px;box-shadow:inset 1px 0 0 #474747"></div>
<div class="ab" style="left:426px;top:8px;width:600px;height:28px;background:linear-gradient(#3b3b3b,#2b2b2b);border-radius:4px 4px 0 0"></div>
<svg class="ab" style="left:430px;top:12px" width="26" height="20" viewBox="430 12 26 20">
<defs><clipPath id="ly"><circle cx="443" cy="21.9" r="7.4"/></clipPath></defs>
<path d="M434.4 14.6 H438.5 L434.4 19Z M434.4 29.2 H438.5 L434.4 24.8Z" fill="#a8a8a8"/>
<path d="M451.2 14.6 H447 L451.2 19.5Z M451.2 29.2 H447 L451.2 24.3Z" fill="#4ab8ec"/>
<circle cx="443" cy="21.9" r="7.4" fill="#f0c43c"/>
<g clip-path="url(#ly)"><circle cx="435.5" cy="21.9" r="6.6" fill="#8c6e1c"/><circle cx="450.5" cy="21.9" r="6.6" fill="#8ea048"/></g>
<circle cx="443" cy="21.9" r="2.6" fill="#23232a"/>
<rect x="443" y="19.8" width="1.6" height="4.2" fill="#3a8ab8"/>
</svg>
<div class="t" style="left:457px;top:18px;font-size:8px;color:#fafafa">OOONA Manager - Change Range</div>
<div class="ab" style="left:966.2px;top:22.3px;width:7.4px;height:1.9px;background:#f4f4f4"></div>
<div class="ab" style="left:986px;top:18.5px;width:7.8px;height:7.4px;border:1.3px solid #eaeaea;border-top-width:2.3px;border-radius:1.5px;background:#2a2a2a"></div>
<div class="ab" style="left:987px;top:22px;width:5.8px;height:0.9px;background:#9a9a9a"></div>
<svg class="ab" style="left:1006px;top:18px" width="8" height="8" viewBox="0 0 8 8"><path d="M1 1 L7 7 M7 1 L1 7" stroke="#f4f4f4" stroke-width="1.5"/></svg>
<svg class="ab" style="left:675.9px;top:48.9px" width="17" height="17" viewBox="0 0 17 17"><rect x="0.5" y="0.2" width="15.5" height="1.7" fill="#4ab0e0"/><path d="M0.8 2 H15.7 L9.5 9 V15 H7 V9Z" fill="#8a8a8a"/><path d="M7 14 L14 7 L16 9 L9 16Z" fill="#e08a30"/><circle cx="8" cy="15.2" r="1.5" fill="#e8c040"/></svg>
<div class="t" style="left:701.6px;top:51px;font-size:12px;color:#f2f2f2">Change Range</div>
<div class="ab" style="left:435px;top:73px;width:570px;height:508px;background:#2a2a2a;border-radius:2px"></div>
<div class="ab" style="left:439px;top:77px;width:563px;height:502.8px;background:#505050"></div>
<div class="ab" style="left:1005px;top:73px;width:13px;height:507.5px;background:#f2f2f2;border:1px solid #fafafa;border-right:1.3px solid #333"></div>
<div class="ab" style="left:1007.1px;top:85px;width:7.7px;height:178.8px;background:#c6c6c6"></div>
<div class="ab" style="left:1008px;top:78px;border-left:3px solid transparent;border-right:3px solid transparent;border-bottom:3px solid #a8a8a8"></div>
<div class="ab" style="left:1008px;top:573.5px;border-left:3px solid transparent;border-right:3px solid transparent;border-top:3px solid #404040"></div>
<div class="ab" style="left:439px;top:77px;width:563px;height:21.6px;background:linear-gradient(#383838,#272727)"></div>
<svg class="ab" style="left:444.6px;top:80px" width="16" height="16" viewBox="0 0 16 16"><path d="M0.5 0.5 H8 L11 3.5 V15.5 H0.5Z" fill="#e8e8e8"/><rect x="1.5" y="2" width="2" height="1.5" fill="#4ab0e0"/><rect x="4" y="2" width="2" height="1.5" fill="#e08a30"/><g fill="#aaa"><rect x="2" y="6" width="7" height="0.8"/><rect x="2" y="8.5" width="7" height="0.8"/><rect x="2" y="11" width="7" height="0.8"/></g><path d="M6 14 L13.5 6.5 L15.5 8.5 L8 16Z" fill="#e08a30"/></svg>
<div class="t" style="left:461px;top:83px;font-size:10.6px;font-weight:bold;color:#fafafa">Order Info</div>
<svg class="ab" style="left:986px;top:84px" width="9" height="6" viewBox="0 0 9 6"><path d="M1 5 L4.5 1.5 L8 5" fill="none" stroke="#f0f0f0" stroke-width="1.5"/></svg>
<div class="ab" style="left:450px;top:103.2px;width:548px;height:32.2px;border:3.4px solid #1f9e2a"></div>
<div class="lbl" style="left:457px;top:119px">From order</div>
<svg class="ab" style="left:554px;top:119.6px" width="11" height="11" viewBox="0 0 11 11"><rect x="0.7" y="0.7" width="7" height="7" rx="1" fill="#8a8a40" stroke="#c8a040" stroke-width="1.2"/><rect x="3.3" y="3.3" width="7" height="7" rx="1" fill="none" stroke="#5aa0c8" stroke-width="1.2" opacity="0.85"/><rect x="3.3" y="3.3" width="4.4" height="4.4" fill="#6a9a40"/></svg>
<svg class="ab" style="left:575px;top:121px" width="11" height="10" viewBox="0 0 11 10"><path d="M1.5 1.5 L9.5 8.5 M9.5 1.5 L1.5 8.5" stroke="#a02222" stroke-width="2.9" stroke-linecap="round"/></svg>
<div class="inp" style="left:587px;top:113px;width:132.3px;height:19px;background:linear-gradient(90deg,#fff calc(100% - 15px),#2e2e2e 0)"><span>189567</span><div class="spin"><svg width="15" height="19" viewBox="0 0 15 19"><rect x="0" y="8.9" width="15" height="1" fill="#222"/><path d="M4.7 7.3 H10.3 L7.5 2.8Z" fill="#f2f2f2"/><path d="M4.7 11.2 H10.3 L7.5 16Z" fill="#f2f2f2"/></svg></div></div>
<div class="lbl" style="left:729px;top:119px">To order</div>
<svg class="ab" style="left:847px;top:121px" width="11" height="10" viewBox="0 0 11 10"><path d="M1.5 1.5 L9.5 8.5 M9.5 1.5 L1.5 8.5" stroke="#a02222" stroke-width="2.9" stroke-linecap="round"/></svg>
<div class="inp" style="left:860px;top:113px;width:132.2px;height:19px;background:linear-gradient(90deg,#fff calc(100% - 15px),#2e2e2e 0)"><span>189570</span><div class="spin"><svg width="15" height="19" viewBox="0 0 15 19"><rect x="0" y="8.9" width="15" height="1" fill="#222"/><path d="M4.7 7.3 H10.3 L7.5 2.8Z" fill="#f2f2f2"/><path d="M4.7 11.2 H10.3 L7.5 16Z" fill="#f2f2f2"/></svg></div></div>
<div class="lbl" style="left:457px;top:152px">Order status</div>
<div class="t" style="left:571px;top:153.5px;font-size:6px;color:#c8c8c8">1</div>
<svg class="ab" style="left:575px;top:152px" width="11" height="10" viewBox="0 0 11 10"><path d="M1.5 1.5 L9.5 8.5 M9.5 1.5 L1.5 8.5" stroke="#a02222" stroke-width="2.9" stroke-linecap="round"/></svg>
<div class="inp" style="left:587px;top:137.8px;width:132.3px;height:36.2px"></div>
<div class="ab" style="left:589px;top:139.7px;width:47.3px;height:15.2px;background:#2a2a2a;border-radius:3px"></div>
<div class="t" style="left:593.6px;top:142.7px;font-size:10px;color:#f8f8f8;transform:scaleX(0.9);transform-origin:0 0">Active</div>
<svg class="ab" style="left:623.5px;top:142.5px" width="9" height="9" viewBox="0 0 9 9"><circle cx="4.5" cy="4.5" r="4.2" fill="#f0f0f0"/><path d="M2.8 2.8 L6.2 6.2 M6.2 2.8 L2.8 6.2" stroke="#2a2a2a" stroke-width="1.2"/></svg>
<div class="lbl" style="left:729px;top:152px">Task type</div>
<div class="inp" style="left:860px;top:146.5px;width:132.2px;height:19px;background:#fff"><span>Select task...</span></div>
<div class="lbl" style="left:457px;top:185.1px">Flag</div>
<div class="inp" style="left:587px;top:180.0px;width:132.3px;height:19px;background:#fff"><span>Select flag...</span></div>
<div class="lbl" style="left:729.2px;top:185.1px">Task status</div>
<div class="inp" style="left:860px;top:180.0px;width:132.2px;height:19px;background:linear-gradient(90deg,#fff calc(100% - 15px),#2e2e2e 0)"><span class="ph">Select task status...</span><div class="arr"><svg width="15" height="19" viewBox="0 0 15 19"><path d="M4.6 7.6 H10.4 L7.5 11.8Z" fill="#f2f2f2"/></svg></div></div>
<div class="lbl" style="left:457px;top:209.77px">Status</div>
<div class="inp" style="left:587px;top:204.67px;width:132.3px;height:19px;background:#fff"><span>Select status...</span></div>
<div class="lbl" style="left:729.2px;top:209.77px">Previous task status</div>
<div class="inp" style="left:860px;top:204.67px;width:132.2px;height:19px;background:linear-gradient(90deg,#fff calc(100% - 15px),#2e2e2e 0)"><span>Select previous task sta...</span><div class="arr"><svg width="15" height="19" viewBox="0 0 15 19"><path d="M4.6 7.6 H10.4 L7.5 11.8Z" fill="#f2f2f2"/></svg></div></div>
<div class="lbl" style="left:457px;top:234.44px">Product</div>
<div class="inp" style="left:587px;top:229.34px;width:132.3px;height:19px;background:linear-gradient(90deg,#fff calc(100% - 15px),#2e2e2e 0)"><span class="ph">Select product...</span><div class="arr"><svg width="15" height="19" viewBox="0 0 15 19"><path d="M4.6 7.6 H10.4 L7.5 11.8Z" fill="#f2f2f2"/></svg></div></div>
<div class="lbl" style="left:729.2px;top:234.44px">Script</div>
<div class="inp" style="left:860px;top:229.34px;width:132.2px;height:19px;background:#fff"><span>Select script...</span></div>
<div class="lbl" style="left:457px;top:259.11px">Product type</div>
<div class="inp" style="left:587px;top:254.01px;width:132.3px;height:19px;background:linear-gradient(90deg,#fff calc(100% - 15px),#2e2e2e 0)"><span>Select product type...</span><div class="arr"><svg width="15" height="19" viewBox="0 0 15 19"><path d="M4.6 7.6 H10.4 L7.5 11.8Z" fill="#f2f2f2"/></svg></div></div>
<div class="lbl" style="left:729.2px;top:259.11px">Product sub type</div>
<div class="inp" style="left:860px;top:254.01px;width:132.2px;height:19px;background:linear-gradient(90deg,#b5b5b5 calc(100% - 15px),#3e3e3e 0)"><span style="color:#5a5a5a">Select product sub type...</span><div class="arr" style="background:#3e3e3e"><svg width="15" height="19" viewBox="0 0 15 19"><path d="M4.6 7.6 H10.4 L7.5 11.8Z" fill="#b0b0b0"/></svg></div></div>
<div class="lbl" style="left:457px;top:283.78px">Source language</div>
<div class="inp" style="left:587px;top:278.68px;width:132.3px;height:19px;background:#fff"><span>Select source language...</span></div>
<div class="lbl" style="left:729.2px;top:283.78px">Target language</div>
<div class="inp" style="left:860px;top:278.68px;width:132.2px;height:19px;background:#fff"><span>Select target language...</span></div>
<div class="lbl" style="left:457px;top:308.45px">From season</div>
<div class="inp" style="left:587px;top:303.35px;width:132.3px;height:19px;background:linear-gradient(90deg,#fff calc(100% - 15px),#2e2e2e 0)"><div class="spin"><svg width="15" height="19" viewBox="0 0 15 19"><rect x="0" y="8.9" width="15" height="1" fill="#222"/><path d="M4.7 7.3 H10.3 L7.5 2.8Z" fill="#f2f2f2"/><path d="M4.7 11.2 H10.3 L7.5 16Z" fill="#f2f2f2"/></svg></div></div>
<div class="lbl" style="left:729.2px;top:308.45px">To season</div>
<div class="inp" style="left:860px;top:303.35px;width:132.2px;height:19px;background:linear-gradient(90deg,#fff calc(100% - 15px),#2e2e2e 0)"><div class="spin"><svg width="15" height="19" viewBox="0 0 15 19"><rect x="0" y="8.9" width="15" height="1" fill="#222"/><path d="M4.7 7.3 H10.3 L7.5 2.8Z" fill="#f2f2f2"/><path d="M4.7 11.2 H10.3 L7.5 16Z" fill="#f2f2f2"/></svg></div></div>
<div class="lbl" style="left:457px;top:333.12px">From episode</div>
<div class="inp" style="left:587px;top:328.02px;width:132.3px;height:19px;background:linear-gradient(90deg,#fff calc(100% - 15px),#2e2e2e 0)"><div class="spin"><svg width="15" height="19" viewBox="0 0 15 19"><rect x="0" y="8.9" width="15" height="1" fill="#222"/><path d="M4.7 7.3 H10.3 L7.5 2.8Z" fill="#f2f2f2"/><path d="M4.7 11.2 H10.3 L7.5 16Z" fill="#f2f2f2"/></svg></div></div>
<div class="lbl" style="left:729.2px;top:333.12px">To episode</div>
<div class="inp" style="left:860px;top:328.02px;width:132.2px;height:19px;background:linear-gradient(90deg,#fff calc(100% - 15px),#2e2e2e 0)"><div class="spin"><svg width="15" height="19" viewBox="0 0 15 19"><rect x="0" y="8.9" width="15" height="1" fill="#222"/><path d="M4.7 7.3 H10.3 L7.5 2.8Z" fill="#f2f2f2"/><path d="M4.7 11.2 H10.3 L7.5 16Z" fill="#f2f2f2"/></svg></div></div>
<div class="lbl" style="left:457px;top:357.79px">Title</div>
<div class="inp" style="left:587px;top:352.69px;width:132.3px;height:19px;background:#fff"></div>
<div class="lbl" style="left:729.2px;top:357.79px">Episode title</div>
<div class="inp" style="left:860px;top:352.69px;width:132.2px;height:19px;background:#fff"></div>
<div class="lbl" style="left:457px;top:382.46px">Purchase Order</div>
<div class="inp" style="left:587px;top:377.36px;width:132.3px;height:19px;background:#fff"></div>
<div class="lbl" style="left:729.2px;top:382.46px">Internal Purchase Order</div>
<div class="inp" style="left:860px;top:377.36px;width:132.2px;height:19px;background:#fff"></div>
<div class="lbl" style="left:457px;top:407.13px">Media number</div>
<div class="inp" style="left:587px;top:402.03px;width:132.3px;height:19px;background:#fff"></div>
<div class="lbl" style="left:729.2px;top:407.13px">Invoice number</div>
<div class="inp" style="left:860px;top:402.03px;width:132.2px;height:19px;background:#fff"></div>
<div class="lbl" style="left:457px;top:431.8px">Broadcast file name</div>
<div class="inp" style="left:587px;top:426.7px;width:132.3px;height:19px;background:#fff"></div>
<div class="lbl" style="left:729.2px;top:431.8px">Production type</div>
<div class="inp" style="left:860px;top:426.7px;width:132.2px;height:19px;background:linear-gradient(90deg,#fff calc(100% - 15px),#2e2e2e 0)"><div class="arr"><svg width="15" height="19" viewBox="0 0 15 19"><path d="M4.6 7.6 H10.4 L7.5 11.8Z" fill="#f2f2f2"/></svg></div></div>
<div class="lbl" style="left:457px;top:456.47px">Order type</div>
<div class="inp" style="left:587px;top:451.37px;width:132.3px;height:19px;background:linear-gradient(90deg,#fff calc(100% - 15px),#2e2e2e 0)"><span class="ph">Select order type...</span><div class="arr"><svg width="15" height="19" viewBox="0 0 15 19"><path d="M4.6 7.6 H10.4 L7.5 11.8Z" fill="#f2f2f2"/></svg></div></div>
<div class="lbl" style="left:729.2px;top:456.47px">Resource type</div>
<div class="inp" style="left:860px;top:451.37px;width:132.2px;height:19px;background:#fff"><span>Select resource type...</span></div>
<div class="lbl" style="left:457px;top:481.14px">Billing manner</div>
<div class="inp" style="left:587px;top:476.04px;width:132.3px;height:19px;background:linear-gradient(90deg,#fff calc(100% - 15px),#2e2e2e 0)"><span class="ph">Select billing manner...</span><div class="arr"><svg width="15" height="19" viewBox="0 0 15 19"><path d="M4.6 7.6 H10.4 L7.5 11.8Z" fill="#f2f2f2"/></svg></div></div>
<div class="lbl" style="left:729.2px;top:481.14px">Sales Person</div>
<div class="inp" style="left:860px;top:476.04px;width:132.2px;height:19px;background:linear-gradient(90deg,#fff calc(100% - 15px),#2e2e2e 0)"><span class="ph">Select sales person...</span><div class="arr"><svg width="15" height="19" viewBox="0 0 15 19"><path d="M4.6 7.6 H10.4 L7.5 11.8Z" fill="#f2f2f2"/></svg></div></div>
<div class="ab" style="left:439px;top:509.8px;width:563px;height:20.7px;background:linear-gradient(#383838,#262626)"></div>
<svg class="ab" style="left:444px;top:513px" width="17" height="14" viewBox="0 0 17 14"><circle cx="4" cy="3.5" r="2.5" fill="#b06a4a"/><circle cx="12" cy="3.5" r="2.5" fill="#8a6a4a"/><path d="M0 11 Q4 5 8 11Z" fill="#888"/><path d="M9 11 Q13 5 17 11Z" fill="#4ab0e0"/><circle cx="8.5" cy="6" r="2.7" fill="#c89040"/><path d="M3.5 14 Q8.5 6.5 13.5 14Z" fill="#e8c040"/></svg>
<div class="t" style="left:461px;top:515px;font-size:10.3px;font-weight:bold;color:#fafafa">Contacts</div>
<svg class="ab" style="left:986px;top:517px" width="9" height="6" viewBox="0 0 9 6"><path d="M1 5 L4.5 1.5 L8 5" fill="none" stroke="#f0f0f0" stroke-width="1.5"/></svg>
<div class="lbl" style="left:457px;top:551.5px">Customer category</div>
<div class="inp" style="left:587px;top:545.8px;width:132.3px;height:19px;background:#fff"><span>Select customer category...</span></div>
<div class="ab" style="left:587px;top:570.9px;width:132.3px;height:8.9px;background:#fff;border-radius:2px 2px 0 0"></div>
<div class="ab" style="left:589px;top:573px;width:128px;height:6.8px;background:#2a2a2a;border-radius:2px 2px 0 0;overflow:hidden"><div class="t" style="left:5px;top:2px;font-size:9px;color:#f0f0f0">Barcelos Productions M...</div><div class="ab" style="left:115.5px;top:1px;width:9px;height:9px;border-radius:50%;background:#f0f0f0"></div></div>
<div class="ab" style="left:860px;top:578px;width:117px;height:1.4px;background:#e8e8e8"></div>
<div class="ab" style="left:977px;top:578px;width:14px;height:1.4px;background:#2b2b2b"></div>
<div class="btn" style="left:431px;top:597px;width:51px;height:22.6px"></div>
<svg class="ab" style="left:436px;top:600px" width="16" height="16" viewBox="0 0 16 16"><circle cx="8" cy="8" r="6.4" fill="none" stroke="#d83c3c" stroke-width="1.9"/><path d="M3.6 3.6 L12.4 12.4" stroke="#d83c3c" stroke-width="1.9"/></svg>
<div class="t" style="left:456.4px;top:604.6px;font-size:9px;color:#f4f4f4;transform:scaleX(0.86);transform-origin:0 0">Close</div>
<div class="btn" style="left:485px;top:597px;width:51.4px;height:22.6px"></div>
<svg class="ab" style="left:490.5px;top:601px" width="16" height="14" viewBox="0 0 16 14"><path d="M1 7.5 L5.5 12 L15 2" fill="none" stroke="#58c048" stroke-width="3"/></svg>
<div class="t" style="left:510.2px;top:604.8px;font-size:9px;color:#f4f4f4;transform:scaleX(0.86);transform-origin:0 0">Apply</div>
<div class="btn" style="left:971px;top:597px;width:50px;height:22.4px"></div>
<svg class="ab" style="left:977px;top:601px" width="16" height="16" viewBox="0 0 16 16"><path d="M2.3 2.3 L13.7 13.7 M13.7 2.3 L2.3 13.7" stroke="#9c2222" stroke-width="4.4" stroke-linecap="round"/><path d="M3 2 L8 6.5 L13 2" fill="none" stroke="#b84a4a" stroke-width="1.2" opacity="0.6"/></svg>
<div class="t" style="left:997px;top:604.6px;font-size:9px;color:#f4f4f4;transform:scaleX(0.86);transform-origin:0 0">Clear</div>
<div class="t" style="left:643.8px;top:615px;font-size:6.2px;font-weight:bold;color:#f4f4f4">Copyright © 2012 <span style="color:#8a8a8a">O</span><span style="color:#e8c040">O</span><span style="color:#4ab0e0">O</span><span style="color:#8a8a8a">NA.NET</span> ltd. All rights reserved.</div>
</body></html>
